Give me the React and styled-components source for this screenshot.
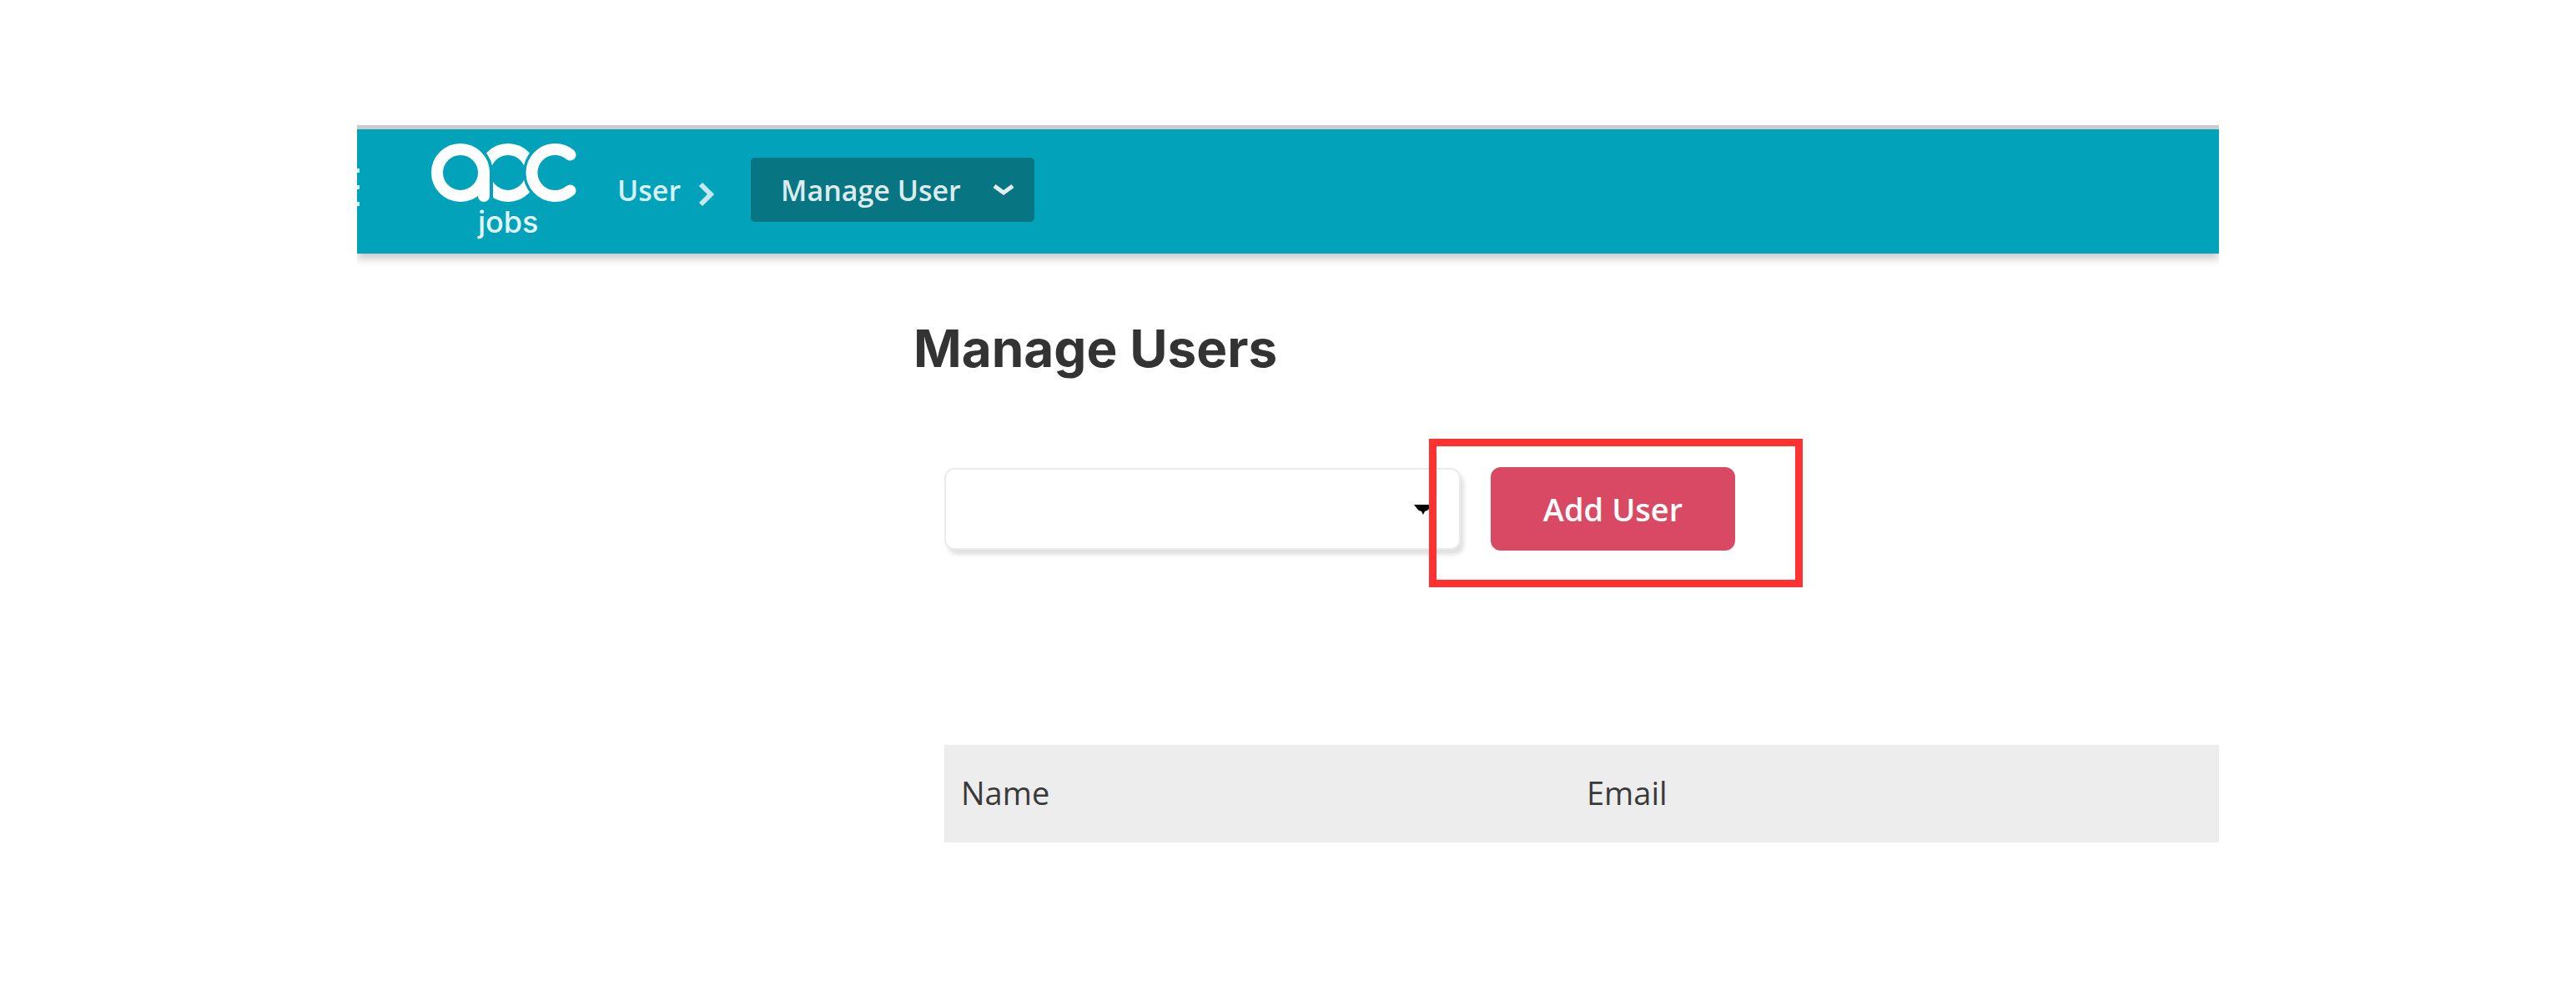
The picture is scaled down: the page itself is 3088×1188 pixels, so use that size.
import React, {useState} from 'react';
import styled, {createGlobalStyle} from 'styled-components';

const GlobalStyle = createGlobalStyle`
  * {
    box-sizing: border-box;
  }

  body {
    margin: 0;
    background-color: #fff;
    font-family: "Open Sans", "Noto Sans", sans-serif;
    color: #3a3a3a;
  }
`
const Page = styled.div`
  padding: 150px 428px;
`
const Header = styled.header`
  display: flex;
  align-items: flex-start;
  height: 154px;
  border-top: 5px solid #ccc;
  background-color: #02a3ba;
  box-shadow: 0 6px 10px rgba(0, 0, 0, 0.22);
  clip-path: inset(0 0 -20px 0);
`
const MenuButton = styled.button`
  width: 3px;
  height: 45px;
  margin: 47px 84px 0 0;
  padding: 0;
  display: flex;
  flex-direction: column;
  justify-content: space-between;
  border: none;
  background: none;
`
const MenuLine = styled.span`
  width: 3px;
  height: 5px;
  background-color: #d9f1f4;
`
const LogoLink = styled.a`
  display: block;
  margin-top: 15px;
  line-height: 0;
`
const Breadcrumbs = styled.nav`
  display: flex;
  align-items: center;
  height: 77px;
  margin: 34px 0 0 47px;
`
const CrumbLink = styled.a`
  font-size: 34px;
  font-weight: 600;
  line-height: 46px;
  color: #d9f1f4;
  text-decoration: none;
`
const CrumbArrow = styled.svg`
  margin: 10px 42px 0 20px;
`
const CrumbButton = styled.button`
  display: flex;
  align-items: center;
  justify-content: space-between;
  width: 340px;
  height: 77px;
  padding: 0 24px 0 36px;
  border: none;
  border-radius: 5px;
  background-color: #087682;
  font: 600 34px/46px "Open Sans", "Noto Sans", sans-serif;
  color: #dcecee;
`
const Main = styled.main`
  padding: 74px 0 0 664px;
`
const Title = styled.h1`
  margin: 0 0 0 3px;
  font: 700 62px/80px Inter, "Open Sans", sans-serif;
  color: #333;
`
const Toolbar = styled.div`
  display: flex;
  align-items: center;
  gap: 36px;
  margin: 102px 0 0 40px;
`
const SelectWrap = styled.div`
  position: relative;
  width: 619px;
`
const Select = styled.select`
  display: block;
  width: 100%;
  height: 98px;
  padding: 0 60px 0 20px;
  appearance: none;
  border: 2px solid #ebebeb;
  border-radius: 12px;
  background-color: #fff;
  box-shadow: 4px 6px 5px rgba(0, 0, 0, 0.12);
  font: 400 38px/52px "Open Sans", sans-serif;
  color: #333;
`
const SelectArrow = styled.svg`
  position: absolute;
  top: 44px;
  right: 34px;
  pointer-events: none;
`
const AddWrap = styled.div`
  position: relative;
`
const AddButton = styled.button`
  display: block;
  width: 293px;
  height: 100px;
  border: none;
  border-radius: 12px;
  background-color: #da4963;
  font: 600 38px/52px "Open Sans", "Noto Sans", sans-serif;
  color: #fff;
`
const Highlight = styled.div`
  position: absolute;
  top: -34px;
  right: -81px;
  bottom: -44px;
  left: -74px;
  border: 9px solid #ff3131;
  pointer-events: none;
`
const Table = styled.table`
  width: calc(100% - 40px);
  margin: 233px 0 0 40px;
  table-layout: fixed;
  border-collapse: collapse;
  background-color: #ededed;
`
const TableHead = styled.th`
  width: ${props => props.$width || 'auto'};
  height: 117px;
  padding: 0 20px 4px;
  font-size: 38px;
  font-weight: 400;
  line-height: 52px;
  text-align: left;
`

const columns = [
    {id: 'name', label: 'Name', width: '750px'},
    {id: 'email', label: 'Email'},
]

const Logo = () => (
    <svg width="178" height="122" viewBox="0 0 178 122" role="img" aria-label="acc jobs">
        <mask id="middle" maskUnits="userSpaceOnUse" x="0" y="0" width="178" height="80">
            <rect width="178" height="80" fill="#fff"/>
            <circle cx="37" cy="37" r="39" fill="#000"/>
            <rect x="36" y="37" width="40" height="42" fill="#000"/>
            <circle cx="150.5" cy="37" r="38.5" fill="#000"/>
        </mask>
        <g fill="none" stroke="#fff" strokeWidth="14" strokeLinecap="round">
            <circle cx="37" cy="37" r="28"/>
            <path d="M65 37V65"/>
            <circle cx="94" cy="37" r="28" mask="url(#middle)"/>
            <path d="M168.5 15.6A28 28 0 1 0 168.5 58.4"/>
        </g>
        <text x="58" y="109" fill="#e3f5f7" fontFamily="Inter, sans-serif" fontSize="36" fontWeight="500">jobs</text>
    </svg>
)

const App = () => {
    const [filter, setFilter] = useState('')

    return (
        <>
            <GlobalStyle/>
            <Page>
                <Header>
                    <MenuButton type="button" aria-label="Menu">
                        <MenuLine/>
                        <MenuLine/>
                        <MenuLine/>
                    </MenuButton>
                    <LogoLink href="#">
                        <Logo/>
                    </LogoLink>
                    <Breadcrumbs>
                        <CrumbLink href="#user">User</CrumbLink>
                        <CrumbArrow width="22" height="32" viewBox="0 0 22 32" aria-hidden="true">
                            <path d="M4 4L16 16L4 28" fill="none" stroke="#c4e8ed" strokeWidth="6"/>
                        </CrumbArrow>
                        <CrumbButton type="button">
                            Manage User
                            <svg width="26" height="16" viewBox="0 0 26 16" aria-hidden="true">
                                <path d="M2 3L13 11L24 3" fill="none" stroke="#e3f0f2" strokeWidth="5"/>
                            </svg>
                        </CrumbButton>
                    </Breadcrumbs>
                </Header>
                <Main>
                    <Title>Manage Users</Title>
                    <Toolbar>
                        <SelectWrap>
                            <Select
                                aria-label="Filter users"
                                value={filter}
                                onChange={e => setFilter(e.target.value)}
                            >
                                <option value=""/>
                            </Select>
                            <SelectArrow width="22" height="12" viewBox="0 0 22 12" aria-hidden="true">
                                <path d="M0 0H22L18 5Q16 8 13 8L11 12L9 8Q6 8 4 5Z" fill="#000"/>
                            </SelectArrow>
                        </SelectWrap>
                        <AddWrap>
                            <AddButton type="button">Add User</AddButton>
                            <Highlight/>
                        </AddWrap>
                    </Toolbar>
                    <Table>
                        <thead>
                            <tr>
                                {
                                    columns.map(column => (
                                        <TableHead key={column.id} scope="col" $width={column.width}>
                                            {column.label}
                                        </TableHead>
                                    ))
                                }
                            </tr>
                        </thead>
                    </Table>
                </Main>
            </Page>
        </>
    );
};

export default App;
